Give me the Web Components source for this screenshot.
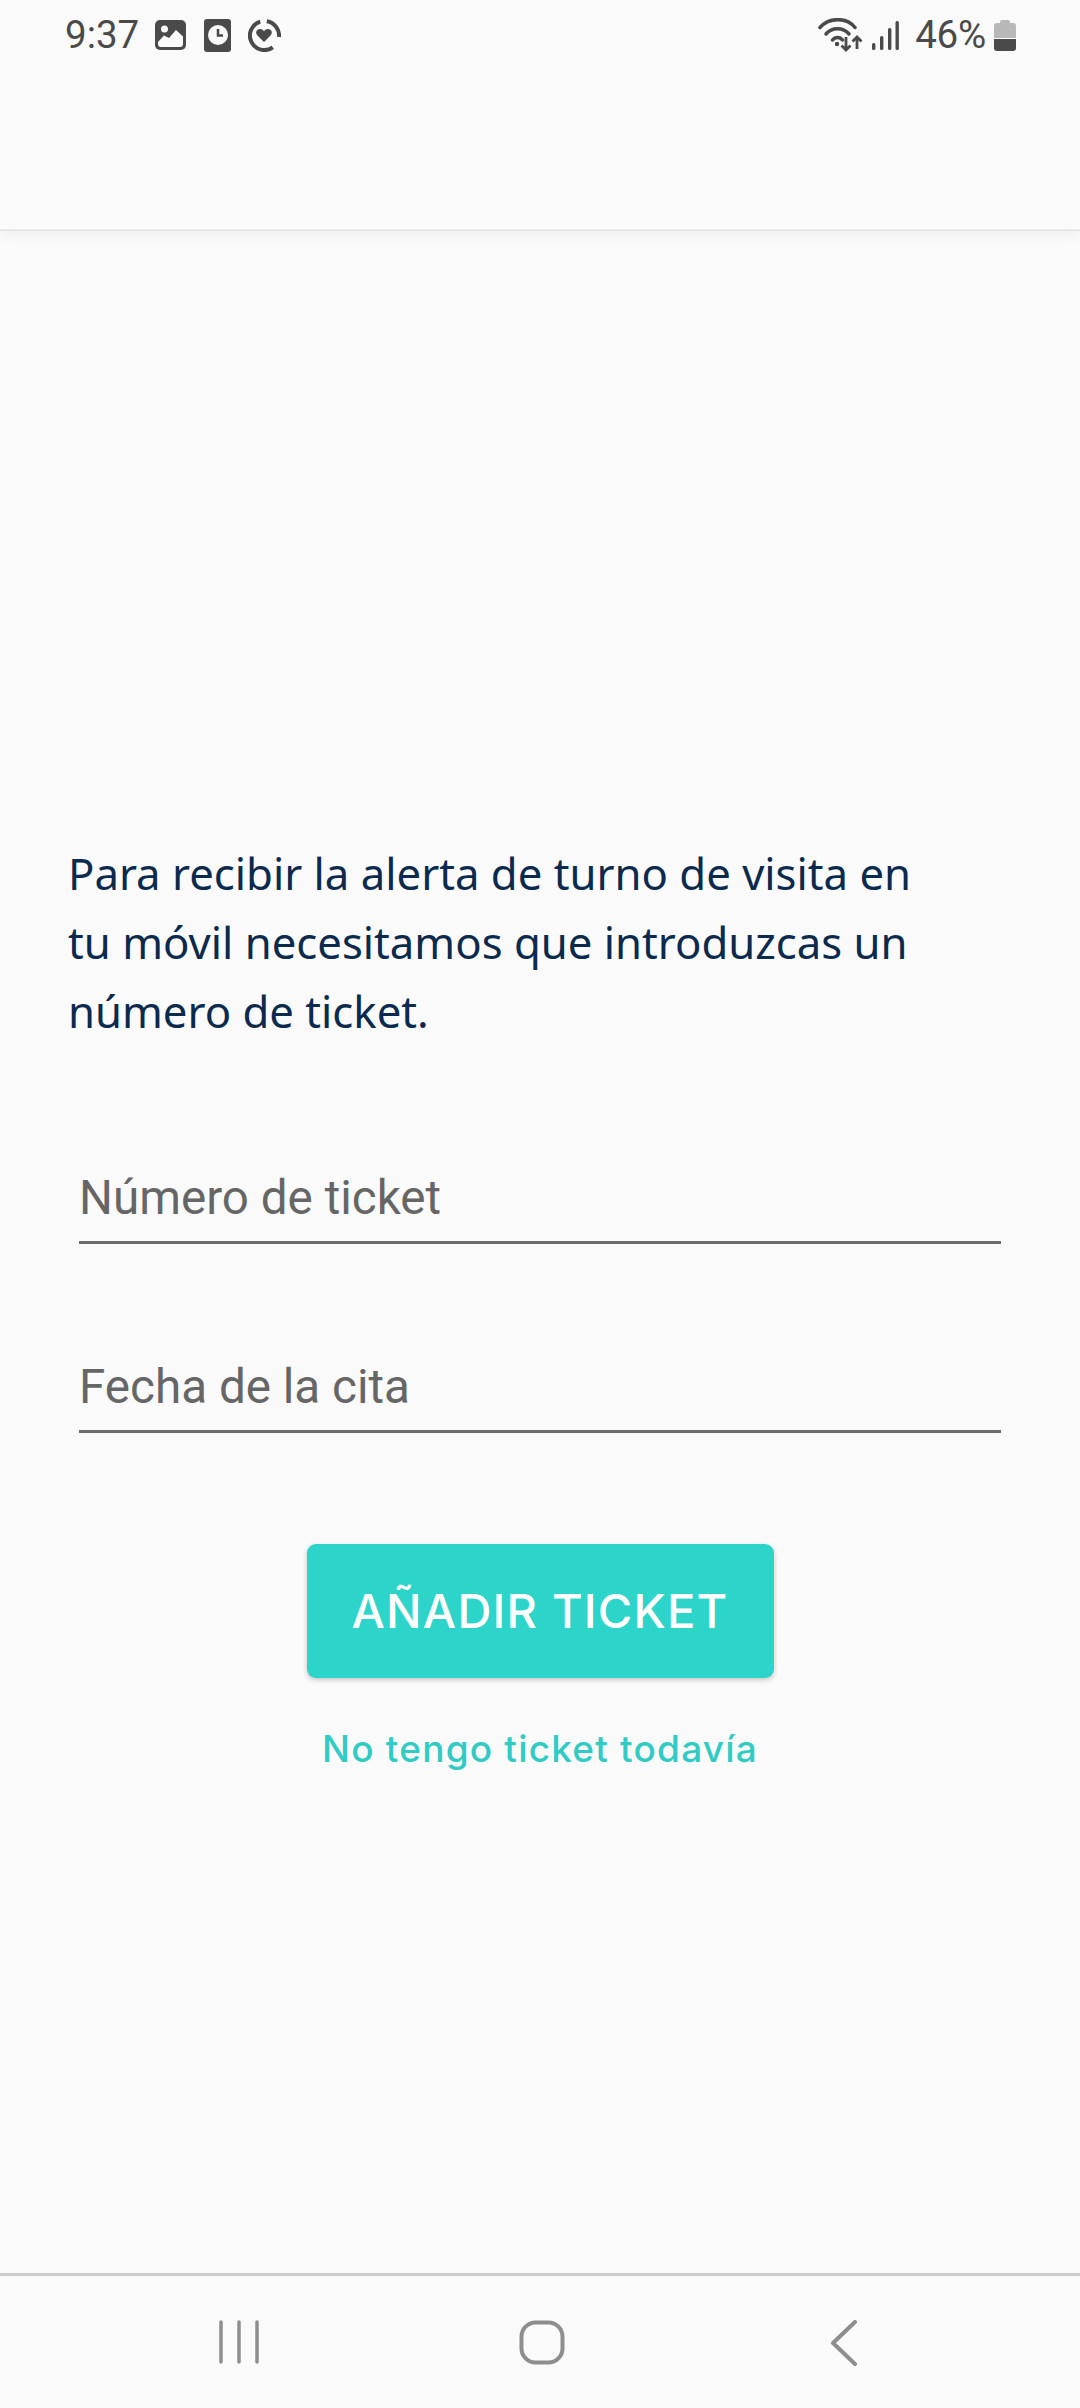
<!DOCTYPE html>
<html lang="es">
<head>
<meta charset="utf-8">
<title>Añadir ticket</title>
<style>
html, body { margin: 0; padding: 0; background: #fafafa; }
body { width: 1080px; height: 2408px; overflow: hidden; }
</style>
</head>
<body>
<ticket-page>
	<status-bar slot="top"></status-bar>
	<intro-text>Para recibir la alerta de turno de visita en<br>tu móvil necesitamos que introduzcas un<br>número de ticket.</intro-text>
	<ticket-field>Número de ticket</ticket-field>
	<ticket-field>Fecha de la cita</ticket-field>
	<ticket-button>AÑADIR TICKET</ticket-button>
	<ticket-link>No tengo ticket todavía</ticket-link>
	<nav-bar slot="bottom"></nav-bar>
</ticket-page>

<script>
const define = (name, html) => {
	customElements.define(name, class extends HTMLElement {
		constructor () {
			super();
			this.attachShadow({ mode: 'open' }).innerHTML = html;
		}
	});
};

define('ticket-page', `<style>
:host { display: flex; flex-direction: column; width: 1080px; height: 2408px; background: #fafafa; }
.app-bar { height: 228px; flex: none; box-shadow: 0 1px 0 #fff, 0 3px 0 #e6e6e6, 0 6px 14px rgba(0,0,0,.05); position: relative; }
main { flex: 1; display: flex; flex-direction: column; padding: 611px 79px 0; }
</style>
<div class="app-bar"><slot name="top"></slot></div>
<main><slot></slot></main>
<slot name="bottom"></slot>`);

define('status-bar', `<style>
:host { display: flex; align-items: center; height: 70px; padding: 0 64px 0 65px; color: #4a4a4a; font: 38.5px/70px Roboto, sans-serif; }
.time { width: 90px; }
svg { display: block; flex: none; }
.spacer { flex: 1; }
.pct { margin: 0 8px 0 15px; letter-spacing: -.2px; }
</style>
<span class="time">9:37</span>
<svg width="31" height="30" viewBox="0 0 31 30" style="margin-right:18px"><rect width="31" height="30" rx="5" fill="#4a4a4a"/><circle cx="9.500" cy="9" r="3.500" fill="#fafafa"/><path d="M3 22 9 15.500l5 2.500 7-8 7 6.500V24q0 3-3 3H6q-3 0-3-3Z" fill="#fafafa"/></svg>
<svg width="27" height="33" viewBox="0 0 27 33" style="margin-right:17px"><rect width="27" height="33" rx="3" fill="#4a4a4a"/><circle cx="14" cy="16" r="10" fill="#fafafa"/><path d="M14 10v6.500h5" fill="none" stroke="#4a4a4a" stroke-width="2.500"/></svg>
<svg width="33" height="33" viewBox="0 0 33 33"><g fill="none" stroke="#4a4a4a" stroke-width="4"><path d="M12.200 2.700A14.500 14.500 0 1 0 24.800 28.400"/><path d="M18.800 2.200A14.500 14.500 0 0 1 31 18"/></g><path d="M16 23 9.500 16.500C6.500 13 9 10 12 10 14 10 15.500 11 16 12.500 16.500 11 18 10 20 10 23 10 25.500 13 22.500 16.500Z" fill="#4a4a4a"/></svg>
<span class="spacer"></span>
<svg width="46" height="34" viewBox="0 0 46 34" style="margin-right:8px"><g fill="none" stroke="#4a4a4a" stroke-width="3.500" stroke-linecap="round"><path d="M2 9.500C11-1 29-1 37 9.500"/><path d="M8 16C14 9 25 9 31 16"/><path d="M14.500 22C17 18.500 22 18.500 24.500 22"/></g><circle cx="19" cy="26" r="2.200" fill="#4a4a4a"/><path d="M28 19V32M23.500 27.500 28 32 32.500 27.500M39 31V19M34.500 23.500 39 19 43.500 23.500" fill="none" stroke="#4a4a4a" stroke-width="2.800"/></svg>
<svg width="28" height="29" viewBox="0 0 28 29"><g fill="#4a4a4a"><rect x="0" y="22" width="3.400" height="7" rx="1.500"/><rect x="8" y="15" width="3.400" height="14" rx="1.500"/><rect x="16" y="7" width="3.400" height="22" rx="1.500"/><rect x="23.500" y="0" width="3.400" height="29" rx="1.500"/></g></svg>
<span class="pct">46%</span>
<svg width="22" height="31" viewBox="0 0 22 31"><path d="M6 3V2q0-2 2-2h6q2 0 2 2v1h3q3 0 3 3v12H0V6q0-3 3-3Z" fill="#b8b8b8"/><path d="M0 19h22v9q0 3-3 3H3q-3 0-3-3Z" fill="#4a4a4a"/></svg>`);

define('intro-text', `<style>
:host { display: block; margin: 0 0 61px -11px; color: #0b2a4d; font: 43.700px/69px "Noto Sans", sans-serif; white-space: nowrap; }
</style><slot></slot>`);

define('ticket-field', `<style>
:host { display: block; height: 189px; box-sizing: border-box; color: #666; font: 47.600px/56px Roboto, sans-serif; }
.line { height: 137px; box-sizing: border-box; display: flex; align-items: flex-end; border-bottom: 3px solid #6b6b6b; padding-bottom: 15px; }
</style><div class="line"><slot></slot></div>`);

define('ticket-button', `<style>
:host { display: block; align-self: center; margin-top: 59px; }
button { display: block; width: 467px; height: 134px; padding: 0; border: 0; border-radius: 9px; background: #2dd4c9; color: #fff; font: 500 47px/134px Inter, sans-serif; letter-spacing: 1.200px; box-shadow: 0 2px 5px rgba(0,0,0,.22); }
</style><button><slot></slot></button>`);

define('ticket-link', `<style>
:host { display: block; align-self: center; margin-top: 43px; color: #30cbc4; font: 500 37px/56px Inter, sans-serif; letter-spacing: 1.200px; }
</style><slot></slot>`);

define('nav-bar', `<style>
:host { display: flex; flex: none; height: 135px; border-top: 3px solid #cdcdcd; box-sizing: border-box; padding-top: 44px; padding-left: 219px; align-items: flex-start; }
svg { display: block; flex: none; }
</style>
<svg width="40" height="44" viewBox="0 0 40 44" style="margin-right:260px"><path d="M2 2v40M20 2v40M38 2v40" stroke="#8e8e8e" stroke-width="3.500" stroke-linecap="round"/></svg>
<svg width="46" height="45" viewBox="0 0 46 45" style="margin-right:265px"><rect x="2.500" y="2.500" width="41" height="40" rx="14" fill="none" stroke="#8e8e8e" stroke-width="4"/></svg>
<svg width="28" height="46" viewBox="0 0 28 46"><path d="M25 2 3 23 25 44" fill="none" stroke="#8e8e8e" stroke-width="4" stroke-linecap="round" stroke-linejoin="round"/></svg>`);
</script>
</body>
</html>
